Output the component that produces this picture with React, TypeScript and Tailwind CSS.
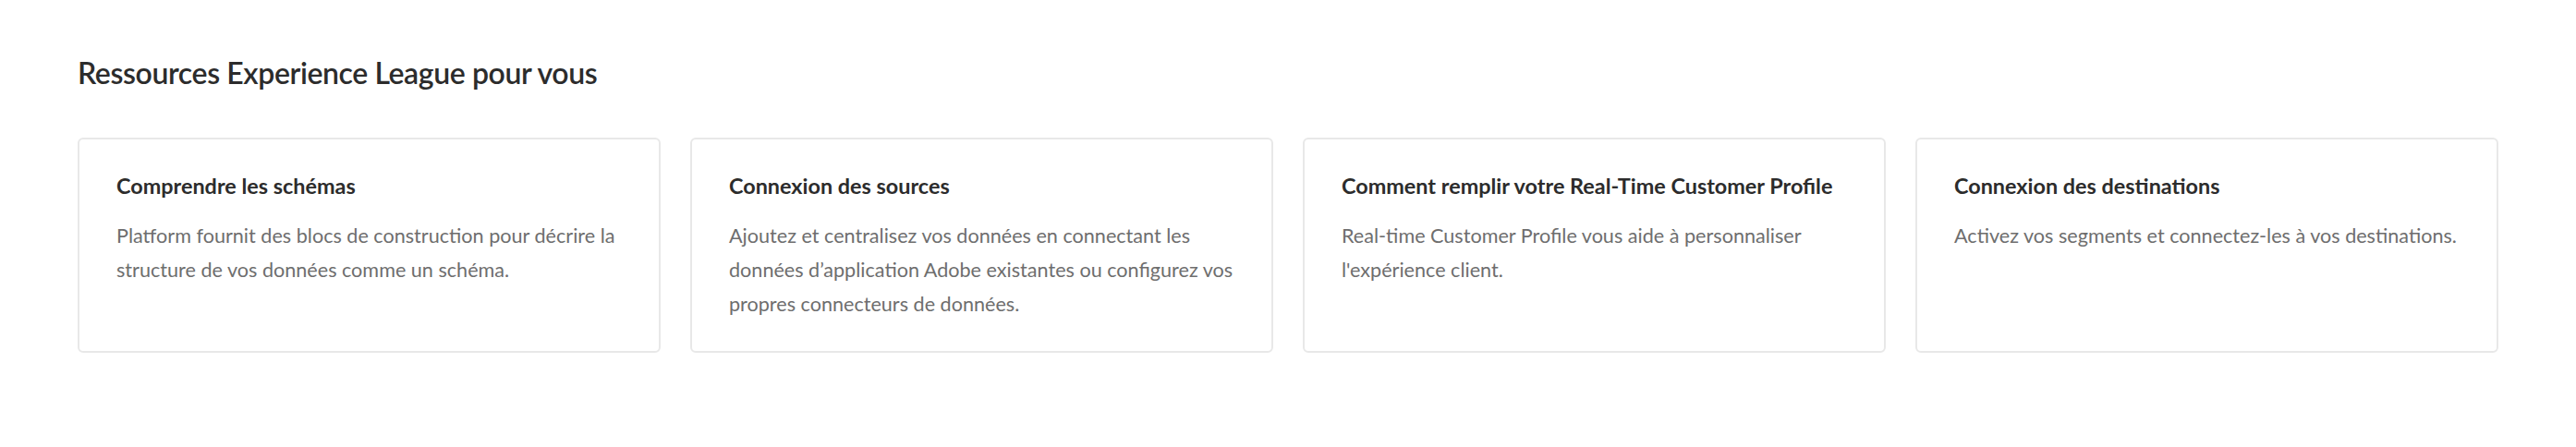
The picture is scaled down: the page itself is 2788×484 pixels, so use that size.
import React from "react";

const cards: { title: string; lines: string[] }[] = [
  {
    title: "Comprendre les schémas",
    lines: [
      "Platform fournit des blocs de construction pour décrire la",
      "structure de vos données comme un schéma.",
    ],
  },
  {
    title: "Connexion des sources",
    lines: [
      "Ajoutez et centralisez vos données en connectant les",
      "données d’application Adobe existantes ou configurez vos",
      "propres connecteurs de données.",
    ],
  },
  {
    title: "Comment remplir votre Real-Time Customer Profile",
    lines: [
      "Real-time Customer Profile vous aide à personnaliser",
      "l'expérience client.",
    ],
  },
  {
    title: "Connexion des destinations",
    lines: ["Activez vos segments et connectez-les à vos destinations."],
  },
];

export default function App() {
  return (
    <div
      className="w-[2788px] h-[484px] bg-white px-[84px] pt-[59px]"
      style={{ fontFamily: "Lato, 'Noto Sans', sans-serif" }}
    >
      <h2 className="text-[32px] leading-[40px] font-semibold text-[#2c2c2c] tracking-[-0.4px]">
        Ressources Experience League pour vous
      </h2>
      <div className="mt-[50px] grid grid-cols-4 gap-[32px]">
        {cards.map((c) => (
          <div
            key={c.title}
            className="border-2 border-[#e8e8e8] rounded-[6px] pl-[40px] pr-[20px] pt-[36px] pb-[32px] bg-white"
          >
            <div className="text-[23.4px] leading-[28px] font-bold text-[#2c2c2c] whitespace-nowrap">
              {c.title}
            </div>
            <div className="mt-[22px] text-[21.6px] leading-[37px] text-[#6e6e6e]">
              {c.lines.map((l) => (
                <div key={l} className="whitespace-nowrap">
                  {l}
                </div>
              ))}
            </div>
          </div>
        ))}
      </div>
    </div>
  );
}
